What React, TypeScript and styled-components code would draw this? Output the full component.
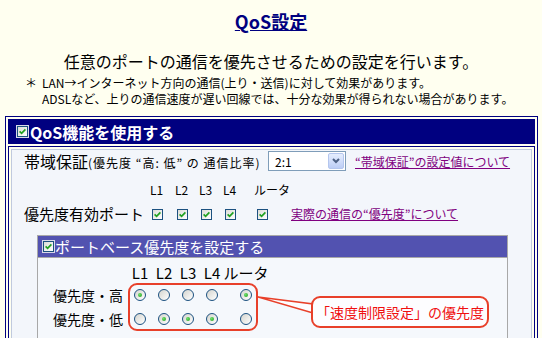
import React from "react";
import styled, { createGlobalStyle } from "styled-components";

const GlobalStyle = createGlobalStyle`
    html, body {
        margin:0;
        overflow:hidden;
        background:#fffff0;
        font-family:"Noto Sans CJK JP", "Noto Sans", sans-serif;
        color:#000;
    }
`

const Page = styled.div`
    padding-top:9px;
    width:542px;
`

const Title = styled.h1`
    margin:0;
    text-align:center;
    font-size:18px;
    line-height:24px;
    font-weight:bold;
    a{
        color:#000080;
        text-decoration:underline;
    }
`

const Lead = styled.p`
    margin:16px 0 0;
    text-align:center;
    font-size:16px;
    line-height:24px;
`

const Notes = styled.div`
    display:flex;
    margin-top:2px;
    padding-left:25px;
    font-size:12px;
    line-height:16px;
    .mark{
        width:17px;
        flex:none;
    }
`

const Frame = styled.div`
    margin:9px 0 0 5px;
    width:533px;
    box-sizing:border-box;
    border:1px solid #000080;
    padding:2px;
    display:flex;
    flex-direction:column;
    gap:2px;
`

const FrameHead = styled.div`
    height:25px;
    background:#000080;
    color:#fff;
    font-size:16px;
    font-weight:bold;
    display:flex;
    align-items:center;
    gap:2px;
    padding-left:9px;
`

const FrameBody = styled.div`
    border:1px solid #000080;
    padding:2px;
`

const Inner = styled.div`
    border:1px solid #c0cade;
    background:#f3f6fb;
    padding:1px 0 40px 12px;
`

const RatioRow = styled.div`
    display:flex;
    align-items:center;
    height:20px;
    .lbl{
        width:244px;
        display:flex;
        align-items:baseline;
        white-space:nowrap;
        font-size:16px;
        small{
            font-size:12px;
            letter-spacing:1px;
        }
    }
`

const Select = styled.div`
    width:78px;
    height:20px;
    box-sizing:border-box;
    margin-right:9px;
    border:1px solid #7f9db9;
    background:#fff;
    display:flex;
    align-items:center;
    justify-content:space-between;
    padding:0 1px 0 6px;
    font-size:12px;
`

const DropBtn = styled.span`
    width:16px;
    height:16px;
    box-sizing:border-box;
    border:1px solid #b4c6ee;
    border-radius:2px;
    background:linear-gradient(#e6eefe, #bccdf6);
    display:flex;
    align-items:center;
    justify-content:center;
`

const Link = styled.a`
    color:#800080;
    text-decoration:underline;
    font-size:12px;
    white-space:nowrap;
`

const PortGrid = styled.div`
    margin-top:11px;
    display:grid;
    grid-template-columns:126px 25px 24px 24px 31px 37px auto;
    grid-template-rows:16px 32px;
    align-items:center;
    font-size:12px;
    line-height:16px;
    .rowLabel{
        font-size:15px;
        white-space:nowrap;
    }
`

const CheckCell = styled.div<{ $shift?: number }>`
    padding-left:${(p) => p.$shift ?? 2}px;
    display:flex;
`

const Box = styled.span<{ $onDark?: boolean }>`
    width:11px;
    height:11px;
    box-sizing:border-box;
    flex:none;
    border:1px solid #1c5180;
    background:linear-gradient(135deg, #dcdcd7, #ffffff);
    display:inline-flex;
    align-items:center;
    justify-content:center;
    box-shadow:${(p) => (p.$onDark ? "0 0 0 1px #d8d8e8" : "none")};
`

const Check: React.FC<{ onDark?: boolean }> = ({ onDark }) => (
    <Box $onDark={onDark}>
        <svg width="7" height="7" viewBox="0 0 7 7">
            <path d="M0.6 3.4 L2.6 5.4 L6.4 1.4" stroke="#21a121" strokeWidth="1.7" fill="none" />
        </svg>
    </Box>
)

const SubPanel = styled.div`
    margin:5px 0 0 13px;
    width:471px;
    box-sizing:border-box;
    border:1px solid #a8a8a8;
    border-bottom:none;
`

const SubHead = styled.div`
    height:21px;
    background:#5252b0;
    border-bottom:1px solid #a8a8a8;
    display:flex;
    align-items:center;
    gap:1px;
    padding-left:5px;
    color:#fff;
    font-size:15px;
`

const SubBody = styled.div`
    position:relative;
    background:#f5f8fc;
    padding:5px 0 30px 15px;
`

const RadioGrid = styled.div`
    display:grid;
    grid-template-columns:75px repeat(4, 24px) 44px;
    grid-template-rows:20px 24px 24px;
    align-items:center;
    justify-items:center;
    font-size:15px;
    line-height:20px;
    white-space:nowrap;
    .rowLabel{
        justify-self:start;
        font-size:14px;
    }
`

const Radio = styled.span<{ $on?: boolean }>`
    width:12px;
    height:12px;
    box-sizing:border-box;
    border-radius:50%;
    border:1px solid #1c5180;
    background:linear-gradient(135deg, #d4d4ce, #ffffff);
    position:relative;
    &::after{
        content:"";
        display:${(p) => (p.$on ? "block" : "none")};
        position:absolute;
        left:3px;
        top:3px;
        width:4px;
        height:4px;
        border-radius:50%;
        background:radial-gradient(circle at 35% 35%, #6fe06a, #1f9e1f);
    }
`

const RedFrame = styled.div`
    position:absolute;
    left:90px;
    top:25px;
    width:130px;
    height:48px;
    box-sizing:border-box;
    border:2px solid #e8402a;
    border-radius:9px;
`

const Tail = styled.svg`
    position:absolute;
    left:220px;
    top:37px;
`

const Callout = styled.div`
    position:absolute;
    left:273px;
    top:38px;
    width:178px;
    height:32px;
    box-sizing:border-box;
    border:2px solid #e8402a;
    border-radius:9px;
    background:#fdfdff;
    color:#f01010;
    font-size:14px;
    line-height:28px;
    text-align:center;
`

const ports = ["L1", "L2", "L3", "L4", "ルータ"]
const high = [true, false, false, false, true]
const low = [false, true, true, true, false]

const App: React.FC = () => {
    return (
        <Page>
            <GlobalStyle />
            <Title><a href="#qos">QoS設定</a></Title>
            <Lead>任意のポートの通信を優先させるための設定を行います。</Lead>
            <Notes>
                <span className="mark">＊</span>
                <div>
                    LAN→インターネット方向の通信(上り・送信)に対して効果があります。<br />
                    ADSLなど、上りの通信速度が遅い回線では、十分な効果が得られない場合があります。
                </div>
            </Notes>
            <Frame>
                <FrameHead>
                    <Check onDark />
                    <span>QoS機能を使用する</span>
                </FrameHead>
                <FrameBody>
                    <Inner>
                        <RatioRow>
                            <div className="lbl">
                                帯域保証<small>(優先度 “高: 低” の 通信比率)</small>
                            </div>
                            <Select>
                                <span>2:1</span>
                                <DropBtn>
                                    <svg width="8" height="6" viewBox="0 0 8 6">
                                        <path d="M1 1 L4 4 L7 1" stroke="#4d6185" strokeWidth="2" fill="none" />
                                    </svg>
                                </DropBtn>
                            </Select>
                            <Link href="#ratio">“帯域保証”の設定値について</Link>
                        </RatioRow>
                        <PortGrid>
                            <span />
                            {ports.map((p) => <span key={p}>{p}</span>)}
                            <span />
                            <span className="rowLabel">優先度有効ポート</span>
                            {ports.map((p, i) => (
                                <CheckCell key={p} $shift={i === 4 ? 3 : 2}><Check /></CheckCell>
                            ))}
                            <Link href="#priority">実際の通信の“優先度”について</Link>
                        </PortGrid>
                        <SubPanel>
                            <SubHead>
                                <Check onDark />
                                <span>ポートベース優先度を設定する</span>
                            </SubHead>
                            <SubBody>
                                <RadioGrid>
                                    <span />
                                    {ports.map((p) => <span key={p}>{p}</span>)}
                                    <span className="rowLabel">優先度・高</span>
                                    {high.map((on, i) => <Radio key={i} $on={on} />)}
                                    <span className="rowLabel">優先度・低</span>
                                    {low.map((on, i) => <Radio key={i} $on={on} />)}
                                </RadioGrid>
                                <RedFrame />
                                <Tail width="56" height="22" viewBox="0 0 56 22">
                                    <polyline points="0,2 55,9 55,18 0,2" fill="#fdfdff" stroke="#e8402a" strokeWidth="1.5" />
                                </Tail>
                                <Callout>「速度制限設定」の優先度</Callout>
                            </SubBody>
                        </SubPanel>
                    </Inner>
                </FrameBody>
            </Frame>
        </Page>
    )
}

export default App
